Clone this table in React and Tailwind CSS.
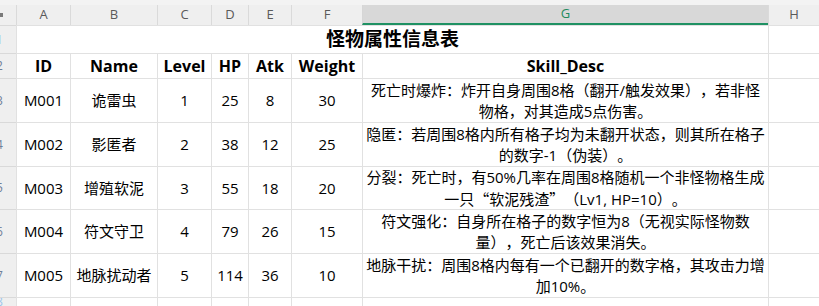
import React from "react";

const font = { fontFamily: '"Open Sans", "Noto Sans CJK SC", sans-serif' };
const cjk = { fontFamily: '"Noto Sans CJK SC", sans-serif' };

const cols = ["A", "B", "C", "D", "E", "F", "G", "H"];

const rows = [
  ["M001", "诡雷虫", "1", "25", "8", "30", ["死亡时爆炸：炸开自身周围8格（翻开/触发效果），若非怪", "物格，对其造成5点伤害。"]],
  ["M002", "影匿者", "2", "38", "12", "25", ["隐匿：若周围8格内所有格子均为未翻开状态，则其所在格子", "的数字-1（伪装）。"]],
  ["M003", "增殖软泥", "3", "55", "18", "20", ["分裂：死亡时，有50%几率在周围8格随机一个非怪物格生成", <>一只<span style={cjk}>“软泥残渣”</span>（Lv1, HP=10）。</>]],
  ["M004", "符文守卫", "4", "79", "26", "15", ["符文强化：自身所在格子的数字恒为8（无视实际怪物数", "量），死亡后该效果消失。"]],
  ["M005", "地脉扰动者", "5", "114", "36", "10", ["地脉干扰：周围8格内每有一个已翻开的数字格，其攻击力增", "加10%。"]],
];

function RowHead({ n, blue }) {
  return (
    <div className="border-t border-[#d9d9d9] bg-[#efefef] overflow-hidden flex items-center">
      <span className={`ml-[-4px] text-[12px] leading-none ${blue ? "text-[#9cc5ec]" : "text-[#6f7f99]"}`}>{n}</span>
    </div>
  );
}

const cell = "border-l border-t border-[#e1e1e1] flex items-center justify-center text-[15px] text-black bg-white whitespace-nowrap overflow-hidden";

export default function App() {
  return (
    <div className="w-[819px] h-[306px] overflow-hidden bg-white" style={font}>
      <div className="h-[5px] bg-[#f3f3f3]" />
      <div className="grid grid-cols-[16px_54px_87px_54px_37px_43px_71px_406px_1fr] grid-rows-[20px_28px_25px_44px_44px_43px_44px_44px_1fr] h-[301px]">
        {/* header row */}
        <div className="bg-[#efefef] relative">
          <div className="absolute left-0 top-[8px] w-[3px] h-[4px] bg-[#7a7a7a]" />
        </div>
        {cols.map((c) =>
          c === "G" ? (
            <div key={c} className="border-l border-[#d6d6d6] bg-[#d8d8d8] border-b-2 border-b-[#1f9163] flex items-center justify-center text-[13px] text-[#1f8a5e]">
              {c}
            </div>
          ) : (
            <div key={c} className="border-l border-[#dadada] bg-[#efefef] flex items-center justify-center text-[13px] text-[#5a5a5a]">
              {c}
            </div>
          )
        )}

        {/* title row */}
        <RowHead n="1" blue />
        <div className={`${cell} col-span-7 font-bold text-[19px]`}>怪物属性信息表</div>
        <div className={cell} />

        {/* column names */}
        <RowHead n="2" />
        {["ID", "Name", "Level", "HP", "Atk", "Weight", "Skill_Desc"].map((h) => (
          <div key={h} className={`${cell} font-bold text-[16px]`}>{h}</div>
        ))}
        <div className={cell} />

        {rows.map((r, i) => (
          <React.Fragment key={r[0]}>
            <RowHead n={String(i + 3)} />
            {r.slice(0, 6).map((v, j) => (
              <div key={j} className={cell}>{v}</div>
            ))}
            <div className={`${cell} flex-col leading-[21px] [text-spacing-trim:space-all]`}>
              <span>{r[6][0]}</span>
              <span>{r[6][1]}</span>
            </div>
            <div className={cell} />
          </React.Fragment>
        ))}

        {/* partial row 8 */}
        <RowHead n="8" blue />
        {cols.map((c) => (
          <div key={c} className={cell} />
        ))}
      </div>
    </div>
  );
}
